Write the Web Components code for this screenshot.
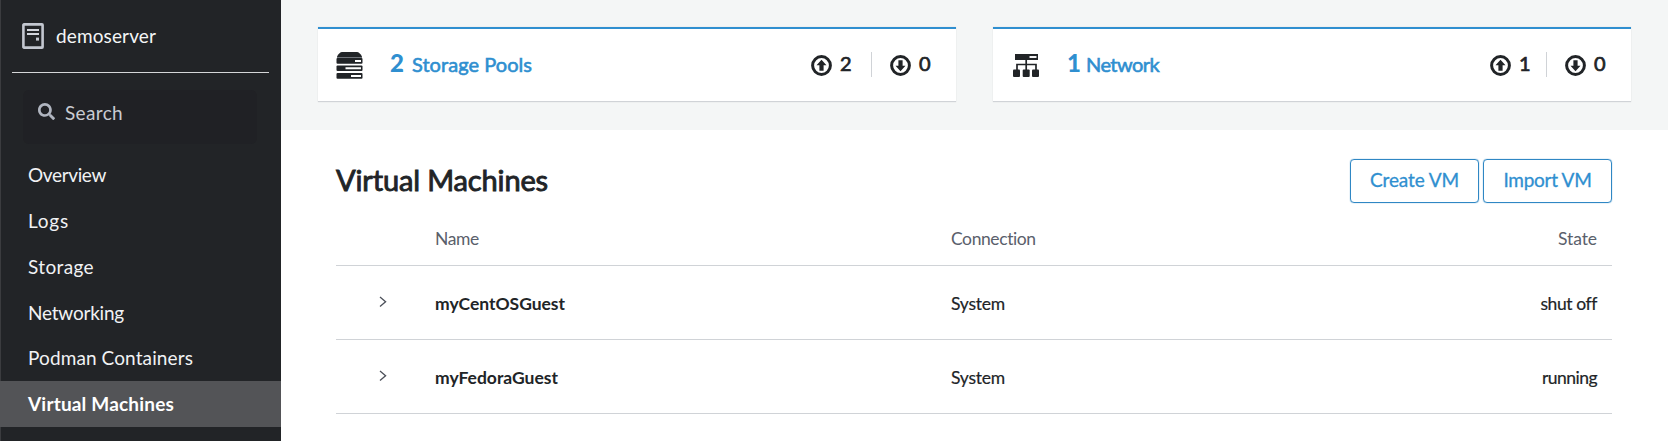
<!DOCTYPE html>
<html lang="en"><head><meta charset="utf-8"><title>Virtual Machines</title>
<style>
html,body{margin:0;height:100%;overflow:hidden}
body{font-family:Lato,"Noto Sans",sans-serif;color:#212427;background:#fff}
</style></head><body>
<vm-app></vm-app>
<script>
const define=(name,html,init)=>customElements.define(name,class extends HTMLElement{
  connectedCallback(){
    if(this.shadowRoot)return;
    const t=document.createElement('template');
    t.innerHTML=html(this);
    this.attachShadow({mode:'open'}).append(t.content.cloneNode(true));
    if(init)init(this);
  }
});

/* A line of text whose tracking is adjusted so that it fills the width in "w". */
define('fit-text',()=>`<style>:host{display:inline-block;white-space:nowrap;line-height:1}span{display:inline-block}</style><span><slot></slot></span>`,el=>{
  const w=+el.getAttribute('w'),n=el.textContent.length,s=el.shadowRoot.querySelector('span');
  const ls=(w-s.getBoundingClientRect().width)/n;
  s.style.letterSpacing=ls.toFixed(3)+'px';
});

const icons={
  server:['0 0 22 26',`<rect x="1.4" y="1.4" width="19.2" height="23.2" rx=".6" fill="none" stroke="#c3c7d0" stroke-width="2.6"/><path d="M5 7h12M5 11h12" stroke="#d2d5dc" stroke-width="2"/><rect x="14" y="14.6" width="3" height="3" fill="#c3c7d0"/>`],
  search:['0 0 512 512',`<path fill="#b0b5c0" d="M505 442.700 405.300 343c-4.500-4.500-10.600-7-17-7H372c27.600-35.300 44-79.700 44-128C416 93.100 322.900 0 208 0S0 93.100 0 208s93.100 208 208 208c48.300 0 92.700-16.400 128-44v16.300c0 6.400 2.500 12.500 7 17l99.700 99.700c9.400 9.400 24.600 9.400 33.900 0l28.300-28.300c9.400-9.400 9.400-24.600.1-34zM208 336c-70.700 0-128-57.200-128-128 0-70.700 57.200-128 128-128 70.700 0 128 57.200 128 128 0 70.700-57.200 128-128 128z"/>`],
  storage:['0 0 27 27',`<path fill="#212427" d="M1 4.500Q3.500 0 6 0H21Q23.500 0 26 4.500V5.500H1z"/><path fill="#70747a" d="M1 5h25v1H1z"/><rect x=".5" y="6" width="26" height="5.800" rx="1" fill="#212427"/><rect x=".5" y="13.400" width="26" height="5.600" rx="1" fill="#212427"/><rect x=".5" y="21" width="26" height="5.800" rx="1" fill="#212427"/><path d="M19 9H25M9.500 16.300H25M15 24H25" stroke="#fff" stroke-width="1.900"/>`],
  network:['0 0 26 23',`<path fill="#212427" d="M2 0h23v6H2z"/><path d="M16.500 3H23.500" stroke="#fff" stroke-width="1.900"/><path d="M13.200 6v10M4 16v-5.500h19V16" fill="none" stroke="#212427" stroke-width="1.700"/><rect y="15.500" width="7" height="7.500" rx="1" fill="#212427"/><rect x="9.700" y="15.500" width="7" height="7.500" rx="1" fill="#212427"/><rect x="19" y="15.500" width="7" height="7.500" rx="1" fill="#212427"/>`],
  up:['0 0 21 21',`<circle cx="10.500" cy="10.500" r="8.900" fill="none" stroke="#212427" stroke-width="3"/><path fill="#212427" d="M10.500 4.800 15.500 10.200H12.600V15.800H8.400V10.200H5.500z"/>`],
  down:['0 0 21 21',`<circle cx="10.500" cy="10.500" r="8.900" fill="none" stroke="#212427" stroke-width="3"/><path fill="#212427" d="M10.500 16.200 5.500 10.800H8.400V5.200H12.600V10.800H15.500z"/>`],
  chevron:['0 0 8 12',`<path d="M1 1 6.600 5.700 1 10.500" fill="none" stroke="#4c5059" stroke-width="1.300"/>`]
};
define('ui-icon',el=>{const[v,p]=icons[el.getAttribute('name')];return `<style>:host{display:block;flex:none;width:${el.getAttribute('w')}px;height:${el.getAttribute('h')}px}svg{display:block;width:100%;height:100%}</style><svg viewBox="${v}" preserveAspectRatio="none">${p}</svg>`});

define('nav-item',()=>`<style>
:host{display:flex;align-items:center;box-sizing:border-box;height:45.750px;padding:0 0 0 28px;font-size:19px;color:#f1f2f4}
:host([current]){background:#535457;color:#fff;font-weight:700}
</style><slot></slot>`);

define('side-bar',()=>`<style>
:host{display:flex;flex-direction:column;box-sizing:border-box;width:281px;height:441px;background:#222427;border-left:1px solid #3b3c3f}
header{display:flex;align-items:center;gap:12px;height:71px;box-sizing:border-box;padding:0 0 0 21px;margin:0 12px 0 0;color:#f4f5f6;font-size:19px}
hr{width:257px;height:1px;border:0;background:#d5d6d8;margin:1px 0 0 11px}
.search{display:flex;align-items:center;gap:10px;box-sizing:border-box;height:54px;width:234px;margin:17px 0 0 22px;padding:0 0 10px 15px;border-radius:6px;background:#202125;color:#c9ccd2;font-size:19px}
.search ui-icon{margin-top:-1px}
nav{display:flex;flex-direction:column;margin:8px 0 0 -1px}
</style>
<header><ui-icon name="server" w="22" h="26"></ui-icon><fit-text w="100">demoserver</fit-text></header><hr>
<div class="search"><ui-icon name="search" w="17" h="17"></ui-icon><fit-text w="58">Search</fit-text></div>
<nav><slot></slot></nav>`);

define('summary-card',el=>`<style>
:host{display:flex;align-items:center;box-sizing:border-box;height:75px;background:#fff;border-top:2px solid #2f8fd0;border-bottom:1px solid #d0d3d7;box-shadow:0 0 1px #d0d3d7;padding:0 24px 0 ${el.getAttribute('pad')}px}
.t{display:flex;align-items:baseline;gap:8px;color:#2f8fd0;flex:1;margin-left:${el.getAttribute('gap')}px;margin-top:-4px}
.n{font-size:24px;font-weight:900}.l{font-size:20px;-webkit-text-stroke:.6px}
.c{display:flex;align-items:center;font-size:20px;-webkit-text-stroke:.7px;gap:8px}
.c fit-text{margin-top:-4px}
i{width:1px;height:25px;background:#d0d3d7;margin:-2px 18px 0}
</style><ui-icon name="${el.getAttribute('icon')}" w="${el.getAttribute('iw')}" h="${el.getAttribute('ih')}"></ui-icon>
<div class="t"><fit-text class="n" w="${el.getAttribute('nw')}">${el.getAttribute('n')}</fit-text><fit-text class="l" w="${el.getAttribute('lw')}">${el.getAttribute('label')}</fit-text></div>
<div class="c"><ui-icon name="up" w="21" h="21"></ui-icon><fit-text w="${el.getAttribute('uw')}">${el.getAttribute('n')}</fit-text></div><i></i>
<div class="c"><ui-icon name="down" w="21" h="21"></ui-icon><fit-text w="13">0</fit-text></div>`);

define('ui-button',()=>`<style>:host{display:flex;align-items:center;justify-content:center;box-sizing:border-box;width:129px;height:44px;border:1px solid #2f87c4;box-shadow:0 0 1px #2f87c4;border-radius:4px;color:#2f8fd0;font-size:19px;-webkit-text-stroke:.3px;padding-bottom:3px}</style><slot></slot>`);

define('vm-row',()=>`<style>
:host{display:grid;grid-template-columns:99px 516px 1fr auto;align-items:center;box-sizing:border-box;height:74px;border-bottom:1px solid #d0d3d7;padding:2px 15px 0 0;font-size:17.500px;-webkit-text-stroke:.2px}
:host([head]){height:62px;color:#5a606b;-webkit-text-stroke:0;padding-top:8px}
::slotted(ui-icon){margin-left:43px;margin-top:-3px}
::slotted(b){-webkit-text-stroke:0}
</style><slot></slot>`);

define('vm-app',()=>`<style>
:host{display:grid;grid-template-columns:281px 1fr;width:1668px;height:441px}
main{display:flex;flex-direction:column}
.cards{box-sizing:border-box;height:130px;background:#f4f6f6;padding:27px 37px 0;display:grid;grid-template-columns:638px 638px;gap:37px}
section{padding:28px 56px 0 55px}
.top{display:flex;align-items:flex-start;gap:4px;height:46px}
.top ui-button{margin-top:1px}
.title{margin:7px auto 0 0;font-size:29px;-webkit-text-stroke:.9px}
</style>
<side-bar>
<nav-item><fit-text w="78">Overview</fit-text></nav-item>
<nav-item><fit-text w="41">Logs</fit-text></nav-item>
<nav-item><fit-text w="66">Storage</fit-text></nav-item>
<nav-item><fit-text w="96">Networking</fit-text></nav-item>
<nav-item><fit-text w="165">Podman Containers</fit-text></nav-item>
<nav-item current><fit-text w="146">Virtual Machines</fit-text></nav-item>
</side-bar>
<main><div class="cards">
<summary-card icon="storage" iw="27" ih="27" pad="18" gap="27" n="2" nw="14" label="Storage Pools" lw="120" uw="13"></summary-card>
<summary-card icon="network" iw="26" ih="23" pad="20" gap="28" n="1" nw="11" label="Network" lw="73" uw="9"></summary-card>
</div><section>
<div class="top"><fit-text class="title" w="212">Virtual Machines</fit-text><ui-button><fit-text w="89">Create VM</fit-text></ui-button><ui-button><fit-text w="88">Import VM</fit-text></ui-button></div>
<vm-row head><span></span><fit-text w="44">Name</fit-text><fit-text w="85">Connection</fit-text><fit-text w="39">State</fit-text></vm-row>
<vm-row><ui-icon name="chevron" w="8" h="12"></ui-icon><b><fit-text w="130">myCentOSGuest</fit-text></b><fit-text w="54">System</fit-text><fit-text w="56">shut off</fit-text></vm-row>
<vm-row><ui-icon name="chevron" w="8" h="12"></ui-icon><b><fit-text w="123">myFedoraGuest</fit-text></b><fit-text w="54">System</fit-text><fit-text w="55">running</fit-text></vm-row>
</section></main>`);
</script></body></html>
